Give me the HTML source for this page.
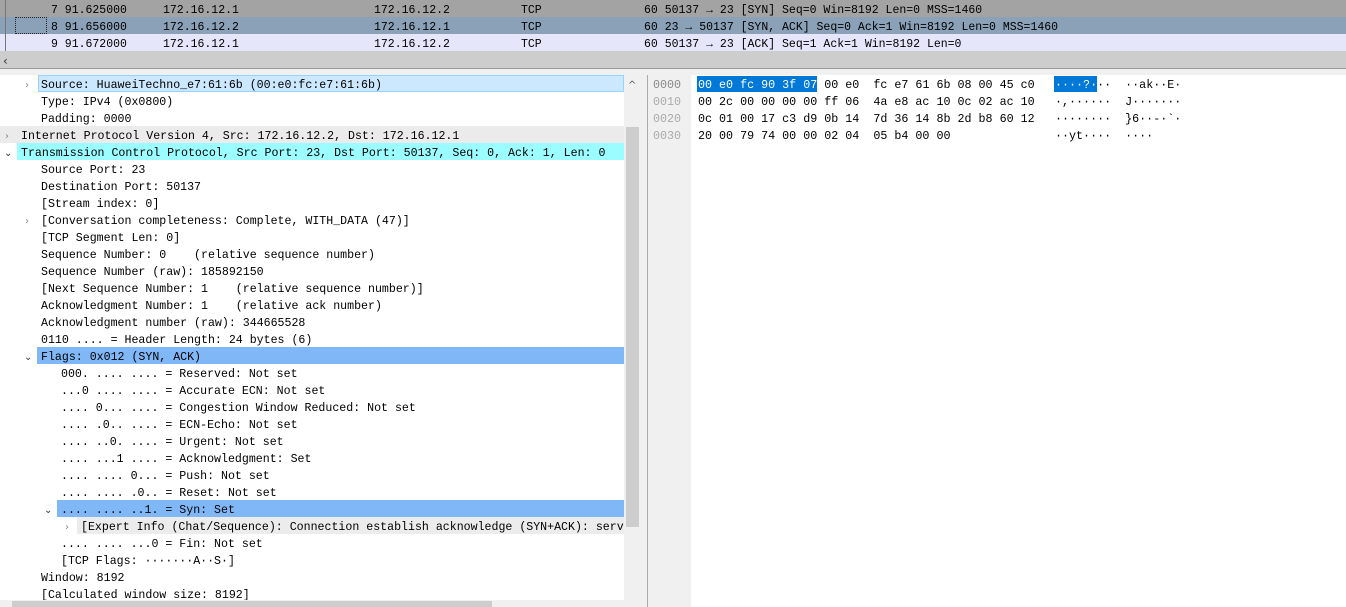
<!DOCTYPE html>
<html><head><meta charset="utf-8"><style>
*{margin:0;padding:0;box-sizing:border-box}
body{width:1346px;height:607px;overflow:hidden;background:#fff;font-family:"Liberation Mono","DejaVu Sans Mono",monospace;font-size:11.5px;color:#000;position:relative}
.r{position:absolute;height:17px;line-height:17px;white-space:pre}
.t{position:absolute;white-space:pre;line-height:17px;height:17px;transform:translateY(2px)}
.d .t{font-size:11.6px}
.h{font-size:11.7px}
.arr{position:absolute;color:#888;font-family:"DejaVu Sans",sans-serif;font-size:10px;line-height:17px;transform:translateY(2px)}
</style></head><body>
<!-- packet list -->
<div class="r" style="left:0;top:0;width:1346px;background:#a3a3a3"></div>
<div class="r" style="left:0;top:17px;width:1346px;background:#8aa1b7"></div>
<div class="r" style="left:0;top:34px;width:1346px;background:#e6e6fa"></div>
<div style="position:absolute;left:5px;top:0;width:1px;height:51px;background:#777"></div>
<div style="position:absolute;left:15px;top:17px;width:32px;height:17px;border:1px dotted #222"></div>
<div class="t" style="left:51px;top:0">7 91.625000</div><div class="t" style="left:163px;top:0">172.16.12.1</div><div class="t" style="left:374px;top:0">172.16.12.2</div><div class="t" style="left:521px;top:0">TCP</div><div class="t" style="left:644px;top:0">60 50137 → 23 [SYN] Seq=0 Win=8192 Len=0 MSS=1460</div>
<div class="t" style="left:51px;top:17px">8 91.656000</div><div class="t" style="left:163px;top:17px">172.16.12.2</div><div class="t" style="left:374px;top:17px">172.16.12.1</div><div class="t" style="left:521px;top:17px">TCP</div><div class="t" style="left:644px;top:17px">60 23 → 50137 [SYN, ACK] Seq=0 Ack=1 Win=8192 Len=0 MSS=1460</div>
<div class="t" style="left:51px;top:34px">9 91.672000</div><div class="t" style="left:163px;top:34px">172.16.12.1</div><div class="t" style="left:374px;top:34px">172.16.12.2</div><div class="t" style="left:521px;top:34px">TCP</div><div class="t" style="left:644px;top:34px">60 50137 → 23 [ACK] Seq=1 Ack=1 Win=8192 Len=0</div>
<div style="position:absolute;left:0;top:51px;width:1346px;height:17px;background:#cdcdcd"></div>
<div class="arr" style="left:3px;top:51px;color:#333;font-size:12px">‹</div>
<div style="position:absolute;left:0;top:68px;width:1346px;height:7px;background:#f0f0f0;border-top:1px solid #999"></div>
<!-- detail pane -->
<div class="d" style="position:absolute;left:0;top:75px;width:641px;height:532px;background:#fff;overflow:hidden">
<div class="r" style="left:38px;top:0;width:586px;background:#cce8ff;border:1px solid #99d1ff;height:17px"></div>
<div class="r" style="left:0;top:51px;width:624px;background:#ebebeb"></div>
<div class="r" style="left:17px;top:68px;width:607px;background:#9bfdff"></div>
<div class="r" style="left:37px;top:272px;width:587px;background:#80b7f7"></div>
<div class="r" style="left:57px;top:425px;width:567px;background:#80b7f7"></div>
<div class="r" style="left:77px;top:442px;width:547px;background:#ececec"></div>
<div class="arr" style="left:25px;top:0">›</div>
<div class="arr" style="left:5px;top:51px">›</div>
<div class="arr" style="left:4px;top:68px;color:#333">⌄</div>
<div class="arr" style="left:25px;top:136px">›</div>
<div class="arr" style="left:24px;top:272px;color:#333">⌄</div>
<div class="arr" style="left:44px;top:425px;color:#333">⌄</div>
<div class="arr" style="left:65px;top:442px">›</div>
<div class="t" style="left:41px;top:0">Source: HuaweiTechno_e7:61:6b (00:e0:fc:e7:61:6b)</div>
<div class="t" style="left:41px;top:17px">Type: IPv4 (0x0800)</div>
<div class="t" style="left:41px;top:34px">Padding: 0000</div>
<div class="t" style="left:21px;top:51px">Internet Protocol Version 4, Src: 172.16.12.2, Dst: 172.16.12.1</div>
<div class="t" style="left:21px;top:68px">Transmission Control Protocol, Src Port: 23, Dst Port: 50137, Seq: 0, Ack: 1, Len: 0</div>
<div class="t" style="left:41px;top:85px">Source Port: 23</div>
<div class="t" style="left:41px;top:102px">Destination Port: 50137</div>
<div class="t" style="left:41px;top:119px">[Stream index: 0]</div>
<div class="t" style="left:41px;top:136px">[Conversation completeness: Complete, WITH_DATA (47)]</div>
<div class="t" style="left:41px;top:153px">[TCP Segment Len: 0]</div>
<div class="t" style="left:41px;top:170px">Sequence Number: 0    (relative sequence number)</div>
<div class="t" style="left:41px;top:187px">Sequence Number (raw): 185892150</div>
<div class="t" style="left:41px;top:204px">[Next Sequence Number: 1    (relative sequence number)]</div>
<div class="t" style="left:41px;top:221px">Acknowledgment Number: 1    (relative ack number)</div>
<div class="t" style="left:41px;top:238px">Acknowledgment number (raw): 344665528</div>
<div class="t" style="left:41px;top:255px">0110 .... = Header Length: 24 bytes (6)</div>
<div class="t" style="left:41px;top:272px">Flags: 0x012 (SYN, ACK)</div>
<div class="t" style="left:61px;top:289px">000. .... .... = Reserved: Not set</div>
<div class="t" style="left:61px;top:306px">...0 .... .... = Accurate ECN: Not set</div>
<div class="t" style="left:61px;top:323px">.... 0... .... = Congestion Window Reduced: Not set</div>
<div class="t" style="left:61px;top:340px">.... .0.. .... = ECN-Echo: Not set</div>
<div class="t" style="left:61px;top:357px">.... ..0. .... = Urgent: Not set</div>
<div class="t" style="left:61px;top:374px">.... ...1 .... = Acknowledgment: Set</div>
<div class="t" style="left:61px;top:391px">.... .... 0... = Push: Not set</div>
<div class="t" style="left:61px;top:408px">.... .... .0.. = Reset: Not set</div>
<div class="t" style="left:61px;top:425px">.... .... ..1. = Syn: Set</div>
<div class="t" style="left:81px;top:442px">[Expert Info (Chat/Sequence): Connection establish acknowledge (SYN+ACK): serv</div>
<div class="t" style="left:61px;top:459px">.... .... ...0 = Fin: Not set</div>
<div class="t" style="left:61px;top:476px">[TCP Flags: ·······A··S·]</div>
<div class="t" style="left:41px;top:493px">Window: 8192</div>
<div class="t" style="left:41px;top:510px">[Calculated window size: 8192]</div>
<div style="position:absolute;left:624px;top:0;width:17px;height:532px;background:#f0f0f0"></div>
<div style="position:absolute;left:626px;top:52px;width:13px;height:400px;background:#cdcdcd"></div>
<div class="arr" style="left:628px;top:0;color:#555">^</div>
<div style="position:absolute;left:0;top:525px;width:624px;height:7px;background:#f0f0f0"></div>
<div style="position:absolute;left:12px;top:526px;width:480px;height:6px;background:#cdcdcd"></div>
</div>
<div style="position:absolute;left:641px;top:75px;width:6px;height:532px;background:#f0f0f0"></div>
<!-- bytes pane -->
<div style="position:absolute;left:647px;top:75px;width:699px;height:532px;border-left:1px solid #aaa;background:#fff">
<div style="position:absolute;left:0;top:0;width:43px;height:532px;background:#f0f0f0"></div>
<div class="t h" style="left:5px;top:0;color:#888">0000</div>
<div class="t h" style="left:5px;top:17px;color:#aaa">0010</div>
<div class="t h" style="left:5px;top:34px;color:#aaa">0020</div>
<div class="t h" style="left:5px;top:51px;color:#aaa">0030</div>
<div style="position:absolute;left:49px;top:1px;width:120px;height:16px;background:#0078d7"></div>
<div style="position:absolute;left:406px;top:1px;width:43px;height:16px;background:#0078d7"></div>
<div class="t h" style="left:50px;top:0"><span style="color:#fff">00 e0 fc 90 3f 07</span> 00 e0  fc e7 61 6b 08 00 45 c0</div>
<div class="t h" style="left:50px;top:17px">00 2c 00 00 00 00 ff 06  4a e8 ac 10 0c 02 ac 10</div>
<div class="t h" style="left:50px;top:34px">0c 01 00 17 c3 d9 0b 14  7d 36 14 8b 2d b8 60 12</div>
<div class="t h" style="left:50px;top:51px">20 00 79 74 00 00 02 04  05 b4 00 00</div>
<div class="t h" style="left:407px;top:0"><span style="color:#fff">····?·</span>··  ··ak··E·</div>
<div class="t h" style="left:407px;top:17px">·,······  J·······</div>
<div class="t h" style="left:407px;top:34px">········  }6··-·`·</div>
<div class="t h" style="left:407px;top:51px">··yt····  ····</div>
</div>
</body></html>
